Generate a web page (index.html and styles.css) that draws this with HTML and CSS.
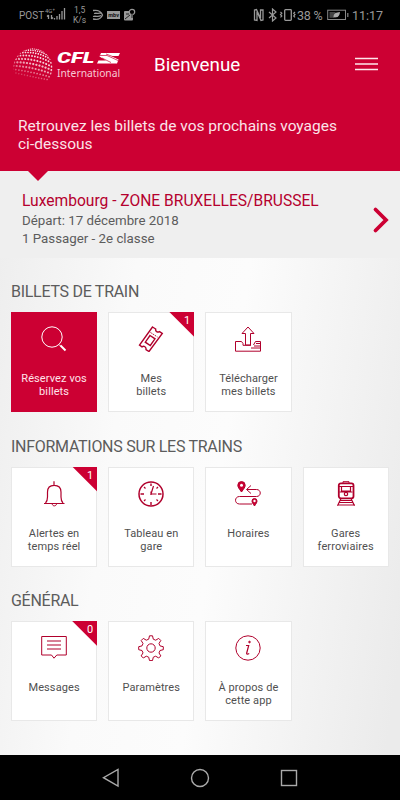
FILE: index.html
```html
<!DOCTYPE html>
<html lang="fr">
<head>
    <meta charset="UTF-8">
    <meta name="viewport" content="width=device-width, initial-scale=1.0">
    <title>CFL International</title>
    <link rel="stylesheet" href="styles.css">
</head>
<body>
    <div class="status-bar">
        <span class="carrier">POST</span>
        <svg class="signal" width="22" height="14" viewBox="0 0 22 14">
            <text x="0" y="5" font-size="6">4G⁺</text>
            <path d="M3.500 7v4M2 8.500l1.500-1.500M6.500 7v4M8 9.500l-1.500 1.500M9.500 10v1.500M12 8v3.500M14.500 6v5.500M17 3v8.500M19.500 0v11.500"/>
        </svg>
        <div class="speed"><span>1,5</span><span>K/s</span></div>
        <svg class="notifs" width="44" height="14" viewBox="0 0 44 14">
            <path d="M1 2.500c6-1 8 1 9.500 4.500-1.500 4-4 5-9.500 4M2 5.500c3-1 4 1 7-1M1 8.500c3-1 5 1 8-1" fill="none" stroke="#999" stroke-width="1.300"/>
            <rect x="15" y="3" width="13" height="8" fill="#999"/>
            <text x="16.300" y="9" font-size="5.500" font-weight="700" class="dark">mbv</text>
            <rect x="32" y="3" width="9" height="9.500" rx="1" fill="#999"/>
            <circle cx="40" cy="4" r="2.700" fill="#000" stroke="#999" stroke-width="1.200"/>
            <path d="M40 6v4M33 11l5-4M34 6h3" stroke="#222"/>
        </svg>
        <svg class="system" width="44" height="14" viewBox="0 0 44 14">
            <path d="M1.500 12V2l2-.5 4 9V2h2.500v10l-2 .5-4-9v9z" fill="none" stroke="#999" stroke-width="1.300"/>
            <path d="M16 4l7 6-3.500 3V1L23 4l-7 6" fill="none" stroke="#999" stroke-width="1.200"/>
            <rect x="31.700" y="1.700" width="6.600" height="10.600" rx=".8" fill="none" stroke="#999" stroke-width="1.300"/>
            <path d="M27.500 4l1.300 1.200-1.300 1.400 1.300 1.400-1.300 1.300M42 4l-1.300 1.200L42 6.600 40.700 8 42 9.300" fill="none" stroke="#999" stroke-width="1.200"/>
        </svg>
        <span class="percent">38 %</span>
        <svg class="battery" width="22" height="12" viewBox="0 0 22 12">
            <rect x=".7" y="1.200" width="17.800" height="9.300" fill="none" stroke="#888"/>
            <path d="M2.500 3h6v5.800h-6z" fill="#444"/>
            <path d="M6.500 8.500C6.500 4 9 3.500 13 3c-.5 4-2 6-5.500 5z" fill="#aaa"/>
            <path d="M20.800 4v4" stroke="#888" stroke-width="1.200"/>
        </svg>
        <span class="clock">11:17</span>
    </div>

    <header class="header">
        <div class="logo">
            <svg class="globe" width="42" height="34" viewBox="0 0 42 34">
                <defs>
                    <linearGradient id="fade" gradientUnits="userSpaceOnUse" x1="24" y1="0" x2="18" y2="32">
                        <stop offset="0" stop-color="#fff"/>
                        <stop offset=".5" stop-color="#f3bac7"/>
                        <stop offset="1" stop-color="#d63058"/>
                    </linearGradient>
                    <clipPath id="ball"><circle cx="20.500" cy="20" r="19.500"/></clipPath>
                </defs>
                <g clip-path="url(#ball)" transform="rotate(12 21 17)" fill="none" stroke="url(#fade)" stroke-linecap="round">
                    <path d="M12 2.500Q21-.5 29 2.500" stroke-width="1.300" stroke-dasharray="0 2"/>
                    <path d="M8 5Q21 .5 33 5" stroke-width="1.500" stroke-dasharray="0 2.300"/>
                    <path d="M5 8Q21 2.500 36 8" stroke-width="1.700" stroke-dasharray="0 2.600"/>
                    <path d="M3 11.500Q21 5.500 38 11.500" stroke-width="1.900" stroke-dasharray="0 2.900"/>
                    <path d="M2 15Q21 9.500 39 15" stroke-width="2.100" stroke-dasharray="0 3.100"/>
                    <path d="M1 18.500Q21 14 40 18.500" stroke-width="2.200" stroke-dasharray="0 3.200"/>
                    <path d="M1 22Q21 19 40 22" stroke-width="2.100" stroke-dasharray="0 3.200"/>
                    <path d="M1 25.500Q21 24 40 25.500" stroke-width="1.800" stroke-dasharray="0 3.100"/>
                    <path d="M2 28.500Q21 29 39 28.500" stroke-width="1.500" stroke-dasharray="0 2.900"/>
                </g>
            </svg>
            <div class="brand">
                <div class="brand-top">
                    <span class="brand-cfl">CFL</span>
                    <svg width="23" height="11" viewBox="0 0 23 11">
                        <path d="M4 0h19l-1.500 3h-7l7 3.500L20 10.500H0l1.500-3h7.500L2.500 3.500z" fill="#fff"/>
                        <path d="M3 2.500h7l11 5M9 1l12 4.500M5 5l9 4.500" fill="none" stroke="#c03" stroke-width=".7"/>
                    </svg>
                </div>
                <span class="brand-sub">International</span>
            </div>
        </div>
        <h1>Bienvenue</h1>
        <svg class="menu" width="23" height="14" viewBox="0 0 23 14">
            <path d="M0 1.500h23M0 7h23M0 12.500h23"/>
        </svg>
    </header>

    <p class="intro">Retrouvez les billets de vos prochains voyages<br>ci-dessous</p>

    <div class="trip">
        <div class="trip-info">
            <h2>Luxembourg - ZONE BRUXELLES/BRUSSEL</h2>
            <p>Départ: 17 décembre 2018</p>
            <p>1 Passager - 2e classe</p>
        </div>
        <svg class="chevron" width="18" height="28" viewBox="0 0 18 28">
            <path d="M3.500 3.500L14 14 3.500 24.500" fill="none" stroke="#c03" stroke-width="3.800" stroke-linecap="round"/>
        </svg>
    </div>

    <main>
        <section>
            <h3>BILLETS DE TRAIN</h3>
            <div class="tiles">
                <div class="tile active">
                    <svg class="icon" viewBox="0 0 26 26">
                        <circle cx="11" cy="11" r="10.200"/>
                        <path d="M18 18.500l1.500 1.500"/>
                        <path d="M19.500 19.500l5 5" stroke-width="2"/>
                    </svg>
                    <span>Réservez vos<br>billets</span>
                </div>
                <div class="tile">
                    <svg class="icon" viewBox="0 0 26 26">
                        <path d="M14.500 1l3.200 2c-.5 2.500 1.800 3.800 3.800 2.600l2.800 1.900L11 25.500l-3-1.800c.5-2.700-2-4.200-4-2.800L1.500 19z" stroke-width="1.400"/>
                        <path d="M12 9.500l5 3.300-4.700 6.700-5-3.300z" stroke-width="1.400"/>
                        <path d="M12.500 6.500l7 4.500" stroke-dasharray="1.500 1"/>
                    </svg>
                    <span>Mes<br>billets</span>
                    <b class="badge">1</b>
                </div>
                <div class="tile">
                    <svg class="icon" viewBox="0 0 26 26">
                        <path d="M10.500 19V7.500H7L13 1l6 6.500h-3.500V19z"/>
                        <path d="M8 17.500l-1.500-2h-6v9.700h25v-9.700h-5L18.500 19M8 17.500v1.800h8M25 17.500h-4M25 20h-6M25 22h-9"/>
                    </svg>
                    <span>Télécharger<br>mes billets</span>
                </div>
            </div>
        </section>

        <section>
            <h3>INFORMATIONS SUR LES TRAINS</h3>
            <div class="tiles">
                <div class="tile">
                    <svg class="icon" viewBox="0 0 26 26">
                        <path d="M13 .3V4M3 22.500h20.500M4.500 22c1.500-1.500 2-3 2-6v-5c0-4.300 2.500-6.700 6.700-6.700s6.800 2.400 6.800 6.700v5c0 3 .5 4.500 2 6" stroke-width="1.200"/>
                        <path d="M11.200 23c.3 2.500 4 2.500 4.300 0"/>
                    </svg>
                    <span>Alertes en<br>temps réel</span>
                    <b class="badge">1</b>
                </div>
                <div class="tile">
                    <svg class="icon" viewBox="0 0 26 26">
                        <circle cx="13" cy="13" r="12" stroke-width="1.500"/>
                        <path d="M13 2.500V5M13 21v3M2.500 13H6M20 13h3.500" stroke-width="1.400"/>
                        <path d="M6 6l1.500 1.500M18.500 7.500L20 6M6 20l1.500-1.500M18.500 18.500L20 20M15.500 5L13 13h5.500M13 10.500v3.500" stroke-width="1.200"/>
                    </svg>
                    <span>Tableau en<br>gare</span>
                </div>
                <div class="tile">
                    <svg class="icon" viewBox="0 0 26 26">
                        <path d="M6.500 11C4 7.500 2.800 6 2.800 4.300a3.700 3.700 0 0 1 7.400 0C10.200 6 9 7.500 6.500 11zM19.500 25c-1.800-2.700-2.500-3.800-2.500-5a2.500 2.500 0 0 1 5 0c0 1.200-.7 2.300-2.500 5z" class="pin"/>
                        <circle cx="6.500" cy="4.300" r="1.500" class="hole"/>
                        <circle cx="19.500" cy="20" r="1.200" class="hole"/>
                        <path d="M16 4.500l-4.500 4L16 12.500M12 8.500h9.500c5 0 5 7 0 7H4.500c-5.300 0-5.300 7.500 0 7.500H17"/>
                    </svg>
                    <span>Horaires</span>
                </div>
                <div class="tile">
                    <svg class="icon" viewBox="0 0 26 26">
                        <path d="M10 2V.7h6V2"/>
                        <rect x="5.800" y="2.300" width="14.700" height="15" rx="2" stroke-width="1.800"/>
                        <path d="M6 5.500h14M8.500 5.500v4.500h9V5.500M6.500 11h13" stroke-width="1.200"/>
                        <circle cx="13" cy="13" r="1.700" stroke-width="1.200"/>
                        <path d="M8 17.500l-3.500 7.300M18 17.500l3.500 7.300M7.500 19.500h11M6 21.500h14M4.500 24h17.500" stroke-width="1.200"/>
                    </svg>
                    <span>Gares<br>ferroviaires</span>
                </div>
            </div>
        </section>

        <section>
            <h3>GÉNÉRAL</h3>
            <div class="tiles">
                <div class="tile">
                    <svg class="icon" viewBox="0 0 26 26">
                        <path d="M.7 1.500h24.600v18.500h-9.500L13 23.200l-2.500-3.200H.7z"/>
                        <path d="M6 6h14M6 10h14M6 14h14" stroke-width="1.200"/>
                    </svg>
                    <span>Messages</span>
                    <b class="badge">0</b>
                </div>
                <div class="tile">
                    <svg class="icon" viewBox="0 0 26 26">
                        <circle cx="13" cy="13" r="4.200"/>
                        <path d="M11.500 .8h3l.8 3.400 2.400 1 3-1.800 2.100 2.100-1.800 3 1 2.400 3.300.8v3l-3.300.8-1 2.400 1.800 3-2.100 2.100-3-1.800-2.400 1-.8 3.400h-3l-.8-3.400-2.400-1-3 1.800-2.100-2.100 1.800-3-1-2.400-3.300-.8v-3l3.300-.8 1-2.400-1.800-3 2.100-2.100 3 1.800 2.400-1z" stroke-linejoin="round"/>
                    </svg>
                    <span>Paramètres</span>
                </div>
                <div class="tile">
                    <svg class="icon" viewBox="0 0 26 26">
                        <circle cx="13" cy="13" r="12.200"/>
                        <path d="M11 10.500h2.700l-2 7.500c-.3 1.300.8 1.500 2.500.5" stroke-width="1.200"/>
                        <circle cx="14.500" cy="7" r=".8" class="pin"/>
                    </svg>
                    <span>À propos de<br>cette app</span>
                </div>
            </div>
        </section>
    </main>

    <nav class="nav-bar">
        <svg width="18" height="20" viewBox="0 0 18 20"><path d="M16 1.500v16.500L1.500 9.700z"/></svg>
        <svg width="20" height="20" viewBox="0 0 20 20"><circle cx="10" cy="10" r="8.500"/></svg>
        <svg width="18" height="18" viewBox="0 0 18 18"><rect x="1.500" y="1.500" width="15" height="15"/></svg>
    </nav>
</body>
</html>
```
FILE: styles.css
```css
* {
    box-sizing: border-box;
}

body {
    margin: 0;
    width: 400px;
    height: 800px;
    overflow: hidden;
    display: flex;
    flex-direction: column;
    font-family: Roboto, 'Liberation Sans', sans-serif;
    color: #505050;
    background: linear-gradient(98deg, #ebebeb 0%, #fafafa 34%, #fcfcfc 56%, #ebebeb 96%);
}

h1, h2, h3, p {
    margin: 0;
    font-weight: 400;
}

svg {
    display: block;
    flex: none;
}

.status-bar {
    height: 30px;
    flex: none;
    padding-left: 19px;
    display: flex;
    align-items: center;
    background: #000;
    color: #999;
    font-size: 12px;
    white-space: nowrap;
}

.carrier {
    width: 26px;
    font-size: 10px;
}

.signal {
    fill: #999;
    stroke: none;
}

.signal path {
    stroke: #999;
    stroke-width: 1.3;
    fill: none;
}

.speed {
    width: 25px;
    margin-left: 6px;
    display: flex;
    flex-direction: column;
    font-size: 8.5px;
    line-height: 10px;
}

.speed span:first-child {
    padding-left: 1px;
}

.notifs {
    margin-left: -6px;
}

.dark {
    fill: #111;
}

.system {
    margin-left: 117px;
}

.percent {
    width: 30px;
    font-size: 12.5px;
    letter-spacing: -0.2px;
}

.clock {
    margin-left: 3px;
    font-size: 12.5px;
}

.header {
    height: 69px;
    flex: none;
    padding: 0 22px 0 13px;
    display: flex;
    align-items: center;
    background: #c03;
    color: #fff;
}

.logo {
    width: 141px;
    display: flex;
    align-items: center;
}

.brand {
    margin: 2px 0 0 2px;
}

.brand-top {
    display: flex;
    align-items: center;
    gap: 1px;
    height: 11px;
}

/* stretched to get the wide logo lettering */
.brand-cfl {
    width: 39px;
    font-size: 14px;
    font-weight: 900;
    font-style: italic;
    line-height: 11px;
    transform: scaleX(1.58);
    transform-origin: left;
}

.brand-sub {
    display: block;
    margin-top: 3px;
    font-family: 'Noto Sans', sans-serif;
    font-size: 10.3px;
    line-height: 12px;
    color: #f7c9d3;
}

.header h1 {
    flex: 1;
    font-size: 18.8px;
}

.menu {
    margin-top: -2px;
    stroke: #ffe6ec;
    stroke-width: 1.6;
}

.intro {
    height: 72px;
    flex: none;
    padding: 18px 20px 0 18px;
    background: #c03;
    color: #fbe3e9;
    font-size: 15.5px;
    line-height: 18px;
}

.trip {
    position: relative;
    height: 87px;
    flex: none;
    padding: 21px 10px 0 22px;
    display: flex;
    justify-content: space-between;
    background: #efefef;
}

/* little arrow pointing from the banner to the trip */
.trip::before {
    content: '';
    position: absolute;
    left: 28px;
    top: 0;
    border: 10px solid transparent;
    border-top-color: #c03;
    border-bottom: 0;
}

.trip h2 {
    font-size: 15.6px;
    line-height: 19px;
    color: #b5002e;
}

.trip p {
    padding-top: 1px;
    font-size: 13.3px;
    line-height: 18px;
    color: #5c5c5c;
}

.trip p + p {
    padding-top: 0;
}

.chevron {
    margin-top: 14px;
}

main {
    flex: 1;
    padding: 23px 0 0 11px;
}

section {
    height: 154.5px;
}

h3 {
    padding-top: 1px;
    font-size: 16px;
    line-height: 19px;
    letter-spacing: -0.28px;
    color: #5c5c5c;
}

.tiles {
    margin-top: 11px;
    display: flex;
    gap: 11px;
}

.tile {
    position: relative;
    width: 86.2px;
    height: 100px;
    padding-top: 13px;
    display: flex;
    flex-direction: column;
    align-items: center;
    background: #fff;
    border: 1px solid #e8e8e8;
    font-size: 11px;
    line-height: 13px;
    letter-spacing: 0.1px;
    text-align: center;
}

.tile.active {
    background: #c03;
    border-color: #c03;
    color: #ffe3ea;
}

.icon {
    width: 26px;
    height: 26px;
    margin-bottom: 20px;
    fill: none;
    stroke: #b0002c;
    stroke-width: 1;
}

.active .icon {
    stroke: #fff;
}

.pin {
    fill: #c03;
}

.hole {
    fill: #fff;
    stroke: none;
}

.badge {
    position: absolute;
    top: -1px;
    right: -1px;
    width: 25px;
    height: 25px;
    padding: 2px 4px 0 0;
    background: #c03;
    clip-path: polygon(0 0, 100% 0, 100% 100%);
    color: #fff;
    font-weight: 400;
    text-align: right;
}

.nav-bar {
    height: 45px;
    flex: none;
    padding: 0 102px;
    display: flex;
    align-items: center;
    justify-content: space-between;
    background: #000;
}

.nav-bar svg {
    fill: none;
    stroke: #aaa;
    stroke-width: 1.4;
}
```
